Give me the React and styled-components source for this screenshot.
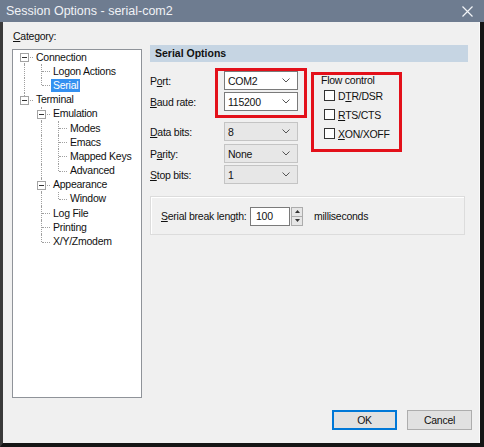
import React from 'react'
import styled, { createGlobalStyle } from 'styled-components'

const GlobalStyle = createGlobalStyle`
  html, body {
    margin: 0;
    padding: 0;
    background: #1b1b1b;
  }
  body {
    font-family: "Liberation Sans", Arial, sans-serif;
    font-size: 10.5px;
    letter-spacing: -0.25px;
    color: #111;
  }
`

// tree rows: depth, guides for ancestor columns, own connector up / down
const treeRows = [
  { label: 'Connection', depth: 0, guides: [], up: false, down: true, box: true },
  { label: 'Logon Actions', depth: 1, guides: [true], up: true, down: true },
  { label: 'Serial', depth: 1, guides: [true], up: true, down: false, selected: true },
  { label: 'Terminal', depth: 0, guides: [], up: true, down: false, box: true },
  { label: 'Emulation', depth: 1, guides: [false], up: true, down: true, box: true },
  { label: 'Modes', depth: 2, guides: [false, true], up: true, down: true },
  { label: 'Emacs', depth: 2, guides: [false, true], up: true, down: true },
  { label: 'Mapped Keys', depth: 2, guides: [false, true], up: true, down: true },
  { label: 'Advanced', depth: 2, guides: [false, true], up: true, down: false },
  { label: 'Appearance', depth: 1, guides: [false], up: true, down: true, box: true },
  { label: 'Window', depth: 2, guides: [false, true], up: true, down: false },
  { label: 'Log File', depth: 1, guides: [false], up: true, down: true },
  { label: 'Printing', depth: 1, guides: [false], up: true, down: true },
  { label: 'X/Y/Zmodem', depth: 1, guides: [false], up: true, down: false },
]

const fields = [
  { label: <>P<u>o</u>rt:</>, value: 'COM2', enabled: true, gap: 0 },
  { label: <><u>B</u>aud rate:</>, value: '115200', enabled: true, gap: 2 },
  { label: <><u>D</u>ata bits:</>, value: '8', gap: 11 },
  { label: <>P<u>a</u>rity:</>, value: 'None', gap: 3 },
  { label: <><u>S</u>top bits:</>, value: '1', gap: 2 },
]

const flows = [
  <>D<u>T</u>R/DSR</>,
  <><u>R</u>TS/CTS</>,
  <><u>X</u>ON/XOFF</>,
]

const Chevron = () => (
  <svg width="8" height="5" viewBox="0 0 8 5">
    <polyline points="0.5,0.5 4,4 7.5,0.5" fill="none" stroke="#555" strokeWidth="1" />
  </svg>
)

const App = () => {
  return (
    <>
      <GlobalStyle />
      <Frame>
        <TitleBar>
          <span>Session Options - serial-com2</span>
          <svg width="11" height="11" viewBox="0 0 11 11">
            <path d="M0.5 0.5 L10.5 10.5 M10.5 0.5 L0.5 10.5" stroke="#f2f4f7" strokeWidth="1.2" />
          </svg>
        </TitleBar>

        <Body>
          <Main>
            <LeftCol>
              <Caption><u>C</u>ategory:</Caption>
              <Tree>
                {treeRows.map((row) => (
                  <TreeRow key={row.label}>
                    {row.guides.map((g, i) => (
                      <Guide key={i} $on={g} />
                    ))}
                    <Elbow $up={row.up} $down={row.down}>
                      {row.box && <Expander />}
                    </Elbow>
                    <NodeText $selected={row.selected}>{row.label}</NodeText>
                  </TreeRow>
                ))}
              </Tree>
            </LeftCol>

            <RightCol>
              <Header>Serial Options</Header>

              <FormArea>
                <Fields>
                  {fields.map((f, i) => (
                    <FieldRow key={i} $gap={f.gap}>
                      <FieldLabel>{f.label}</FieldLabel>
                      <Combo $enabled={f.enabled}>
                        <span>{f.value}</span>
                        <Chevron />
                      </Combo>
                    </FieldRow>
                  ))}
                </Fields>

                <FlowGroup>
                  <FlowTitle>Flow control</FlowTitle>
                  {flows.map((f, i) => (
                    <CheckRow key={i}>
                      <CheckBox />
                      <span>{f}</span>
                    </CheckRow>
                  ))}
                </FlowGroup>

                <Mark $left={65} $top={-3} $width={92} $height={50} />
                <Mark $left={161} $top={1} $width={91} $height={80} />
              </FormArea>

              <BreakGroup>
                <BreakLabel><u>S</u>erial break length:</BreakLabel>
                <Spin>
                  <SpinInput>100</SpinInput>
                  <SpinButtons>
                    <SpinBtn>
                      <svg width="5" height="3" viewBox="0 0 5 3"><polygon points="2.5,0 5,3 0,3" fill="#333" /></svg>
                    </SpinBtn>
                    <SpinBtn>
                      <svg width="5" height="3" viewBox="0 0 5 3"><polygon points="0,0 5,0 2.5,3" fill="#333" /></svg>
                    </SpinBtn>
                  </SpinButtons>
                </Spin>
                <Unit>milliseconds</Unit>
              </BreakGroup>
            </RightCol>
          </Main>

          <Footer>
            <Button $primary>OK</Button>
            <Button>Cancel</Button>
          </Footer>
        </Body>
      </Frame>
    </>
  )
}

// Style components

const Frame = styled.div`
  width: 484px;
  height: 447px;
  display: flex;
  flex-direction: column;
  overflow: hidden;
`

const TitleBar = styled.div`
  height: 22px;
  flex: none;
  background: #6e7c90;
  color: #f0f2f6;
  font-size: 12.5px;
  letter-spacing: 0;
  display: flex;
  align-items: center;
  justify-content: space-between;
  padding: 0 11px 0 6px;
  box-sizing: border-box;

  span {
    padding-bottom: 1px;
  }
`

const Body = styled.div`
  flex: 1;
  display: flex;
  flex-direction: column;
  background: #f0f0f0;
  border-left: 3px solid #3a3a3a;
  border-right: 4px solid #151515;
  border-bottom: 4px solid #151515;
  box-shadow: inset -1px 0 0 #fafafa;
  padding: 7px 0 13px 9px;
`

const Main = styled.div`
  display: flex;
`

const LeftCol = styled.div`
  width: 130px;
  display: flex;
  flex-direction: column;
`

const Caption = styled.div`
  height: 14px;
  line-height: 14px;
  margin-bottom: 6px;
  padding-left: 1px;
`

const Tree = styled.div`
  height: 349px;
  box-sizing: border-box;
  background: #fff;
  border: 1px solid #8f9399;
  padding: 0 0 0 3px;
`

const TreeRow = styled.div`
  height: 14.2px;
  display: flex;
  align-items: stretch;
`

const Guide = styled.div`
  width: 17px;
  flex: none;
  position: relative;

  &::before {
    content: '';
    display: ${(p) => (p.$on ? 'block' : 'none')};
    position: absolute;
    left: 8px;
    top: 0;
    bottom: 0;
    border-left: 1px dotted #a0a0a0;
  }
`

const Elbow = styled.div`
  width: 17px;
  flex: none;
  position: relative;

  &::before {
    content: '';
    position: absolute;
    left: 8px;
    top: ${(p) => (p.$up ? '0' : '50%')};
    bottom: ${(p) => (p.$down ? '0' : '50%')};
    border-left: 1px dotted #a0a0a0;
  }

  &::after {
    content: '';
    position: absolute;
    left: 9px;
    right: 0;
    top: 50%;
    border-top: 1px dotted #a0a0a0;
  }
`

const Expander = styled.div`
  position: absolute;
  left: 4px;
  top: 3px;
  width: 7px;
  height: 7px;
  background: #fff;
  border: 1px solid #a3a3a3;
  z-index: 1;

  &::after {
    content: '';
    position: absolute;
    left: 1px;
    right: 1px;
    top: 3px;
    height: 1px;
    background: #333;
  }
`

const NodeText = styled.span`
  align-self: center;
  margin-left: 1px;
  padding: 0 2px;
  line-height: 13px;
  white-space: nowrap;
  background: ${(p) => (p.$selected ? '#3390f0' : 'transparent')};
  color: ${(p) => (p.$selected ? '#fff' : 'inherit')};
`

const RightCol = styled.div`
  margin-left: 8px;
  width: 318px;
  padding-top: 16px;
  display: flex;
  flex-direction: column;
`

const Header = styled.div`
  height: 17px;
  line-height: 17px;
  background: #c6d5e3;
  font-weight: bold;
  padding-left: 5px;
  letter-spacing: 0;
`

const FormArea = styled.div`
  position: relative;
  display: flex;
  margin-top: 9px;
`

const Fields = styled.div`
  display: flex;
  flex-direction: column;
`

const FieldRow = styled.div`
  display: grid;
  grid-template-columns: 74px 74px;
  align-items: center;
  height: 19px;
  margin-top: ${(p) => p.$gap}px;
`

const FieldLabel = styled.div`
  padding-top: 1px;
`

const Combo = styled.div`
  height: 19px;
  box-sizing: border-box;
  display: flex;
  align-items: center;
  justify-content: space-between;
  padding: 0 7px 0 3px;
  background: ${(p) => (p.$enabled ? '#fff' : '#e7e7e7')};
  border: 1px solid ${(p) => (p.$enabled ? '#7a7a7a' : '#c4c4c4')};
`

const FlowGroup = styled.div`
  margin-left: 18px;
  width: 84px;
  display: flex;
  flex-direction: column;
`

const FlowTitle = styled.div`
  height: 15px;
  line-height: 12px;
  padding: 3px 0 0 5px;
  box-sizing: border-box;
`

const CheckRow = styled.div`
  height: 19px;
  display: flex;
  align-items: center;
  padding-left: 8px;
  gap: 3px;
`

const CheckBox = styled.div`
  width: 11px;
  height: 11px;
  box-sizing: border-box;
  border: 1px solid #333;
  background: #fff;
`

const Mark = styled.div`
  position: absolute;
  left: ${(p) => p.$left}px;
  top: ${(p) => p.$top}px;
  width: ${(p) => p.$width}px;
  height: ${(p) => p.$height}px;
  box-sizing: border-box;
  border: 3px solid #e3101a;
  pointer-events: none;
`

const BreakGroup = styled.div`
  margin-top: 12px;
  width: 315px;
  height: 39px;
  box-sizing: border-box;
  border: 1px solid #dcdcdc;
  box-shadow: inset 1px 1px 0 #fff;
  display: flex;
  align-items: center;
  padding: 1px 0 0 10px;
`

const BreakLabel = styled.div`
  width: 89px;
`

const Spin = styled.div`
  display: flex;
  height: 19px;
`

const SpinInput = styled.div`
  width: 40px;
  box-sizing: border-box;
  background: #fff;
  border: 1px solid #7a7a7a;
  padding-left: 5px;
  line-height: 17px;
`

const SpinButtons = styled.div`
  width: 12px;
  display: flex;
  flex-direction: column;
  margin-left: 1px;
`

const SpinBtn = styled.div`
  flex: 1;
  display: flex;
  align-items: center;
  justify-content: center;
  background: #e6e6e6;
  border: 1px solid #acacac;
  & + & {
    border-top: none;
  }
`

const Unit = styled.div`
  margin-left: 11px;
`

const Footer = styled.div`
  margin-top: auto;
  display: flex;
  justify-content: flex-end;
  gap: 10px;
  padding-right: 8px;
`

const Button = styled.div`
  width: 65px;
  height: 20px;
  box-sizing: border-box;
  display: flex;
  align-items: center;
  justify-content: center;
  background: #e1e1e1;
  border: 1px solid ${(p) => (p.$primary ? '#0078d7' : '#adadad')};
  box-shadow: ${(p) => (p.$primary ? 'inset 0 0 0 1px #0078d7' : 'none')};
`

export default App
